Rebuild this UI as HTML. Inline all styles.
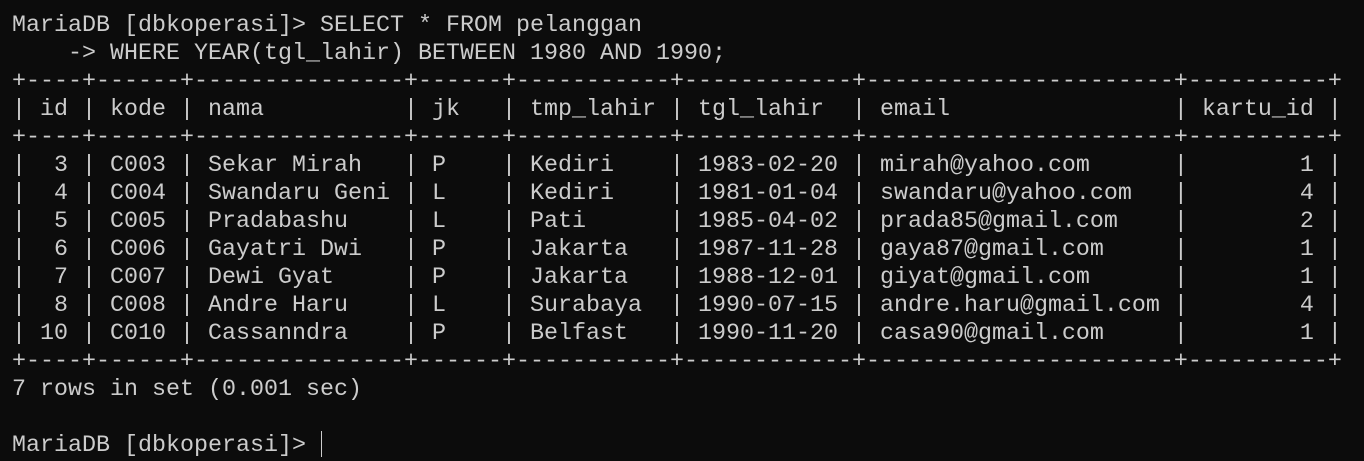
<!DOCTYPE html>
<html><head><meta charset="utf-8"><style>
html,body{margin:0;padding:0;background:#0c0c0c;width:1364px;height:461px;overflow:hidden}
pre{margin:0;position:absolute;left:12px;top:12px;font-family:"Liberation Mono",monospace;font-size:23.33px;line-height:28px;color:#cccccc;white-space:pre}
.cur{position:absolute;left:321px;top:431px;width:1px;height:26px;background:#cccccc}
</style></head><body>
<pre>MariaDB [dbkoperasi]&gt; SELECT * FROM pelanggan
    -&gt; WHERE YEAR(tgl_lahir) BETWEEN 1980 AND 1990;
+----+------+---------------+------+-----------+------------+----------------------+----------+
| id | kode | nama          | jk   | tmp_lahir | tgl_lahir  | email                | kartu_id |
+----+------+---------------+------+-----------+------------+----------------------+----------+
|  3 | C003 | Sekar Mirah   | P    | Kediri    | 1983-02-20 | mirah@yahoo.com      |        1 |
|  4 | C004 | Swandaru Geni | L    | Kediri    | 1981-01-04 | swandaru@yahoo.com   |        4 |
|  5 | C005 | Pradabashu    | L    | Pati      | 1985-04-02 | prada85@gmail.com    |        2 |
|  6 | C006 | Gayatri Dwi   | P    | Jakarta   | 1987-11-28 | gaya87@gmail.com     |        1 |
|  7 | C007 | Dewi Gyat     | P    | Jakarta   | 1988-12-01 | giyat@gmail.com      |        1 |
|  8 | C008 | Andre Haru    | L    | Surabaya  | 1990-07-15 | andre.haru@gmail.com |        4 |
| 10 | C010 | Cassanndra    | P    | Belfast   | 1990-11-20 | casa90@gmail.com     |        1 |
+----+------+---------------+------+-----------+------------+----------------------+----------+
7 rows in set (0.001 sec)

MariaDB [dbkoperasi]&gt; </pre>
<div class="cur"></div>
</body></html>
